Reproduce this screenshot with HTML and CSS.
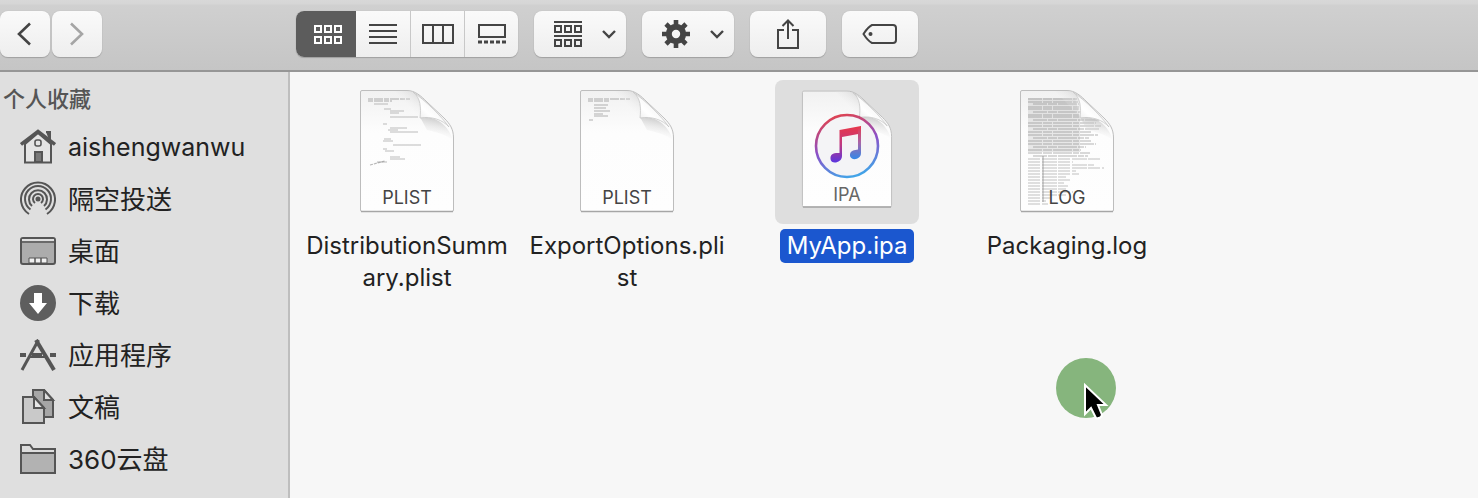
FILE: index.html
```html
<!DOCTYPE html>
<html lang="zh-CN">
<head>
<meta charset="utf-8">
<title>MyApp</title>
<link rel="stylesheet" href="styles.css">
</head>
<body>
<svg class="defs" aria-hidden="true">
  <defs>
    <linearGradient id="paper" x1="0" y1="0" x2="0" y2="1"><stop offset="0" stop-color="#f1f1f1"/><stop offset=".35" stop-color="#fdfdfd"/><stop offset="1" stop-color="#fefefe"/></linearGradient>
    <linearGradient id="foldShade" x1="0" y1="1" x2="1" y2="0"><stop offset=".3" stop-color="#fff" stop-opacity="0"/><stop offset="1" stop-color="#b4b4b4"/></linearGradient>
    <linearGradient id="curlShade" x1=".7" y1="0" x2=".4" y2="1"><stop offset="0" stop-color="#a8a8a8"/><stop offset="1" stop-color="#fff" stop-opacity="0"/></linearGradient>
    <linearGradient id="curl" x1="0" y1="1" x2="1" y2="0"><stop offset="0" stop-color="#ddd"/><stop offset=".4" stop-color="#fff"/><stop offset="1" stop-color="#e6e6e6"/></linearGradient>
    <linearGradient id="ring" x1=".3" y1="0" x2=".6" y2="1"><stop offset="0" stop-color="#e0434f"/><stop offset=".5" stop-color="#8b50c8"/><stop offset="1" stop-color="#41a5e8"/></linearGradient>
    <linearGradient id="noteL" x1="0" y1="0" x2="0" y2="1"><stop offset="0" stop-color="#e8374a"/><stop offset=".5" stop-color="#c03a80"/><stop offset="1" stop-color="#5a35e0"/></linearGradient>
    <linearGradient id="noteR" x1="0" y1="0" x2="0" y2="1"><stop offset="0" stop-color="#e8374a"/><stop offset=".5" stop-color="#a866a8"/><stop offset="1" stop-color="#3388e8"/></linearGradient>
    <symbol id="page" viewBox="0 0 144 144">
      <path d="M27 10.500H72C80 10.500 86 16 92 22L109 38C115 44 118.500 49 118.500 58V130a1.500 1.500 0 0 1-1.500 1.500H27a1.500 1.500 0 0 1-1.500-1.500V12a1.500 1.500 0 0 1 1.500-1.500z" fill="url(#paper)" stroke="#bdbdbd"/>
    </symbol>
    <symbol id="fold" viewBox="0 0 144 144">
      <path d="M60 11H72C80 11 87 18 92 22L85 37z" fill="url(#foldShade)" opacity=".7"/>
      <path d="M85 37C99 36 112 42 118 60C110 54 100 52 92 50z" fill="url(#curlShade)" opacity=".7"/>
      <path d="M78 12C86 18 86 28 85 38C97 36 108 40 114 47C108 38 90 20 78 12z" fill="url(#curl)" stroke="#c6c6c6" stroke-width=".8"/>
      <path d="M26 131.500H118" stroke="#a6a6a6" stroke-width="1.500"/>
    </symbol>
    <symbol id="chevron" viewBox="0 0 16 10"><path d="M2 2l6 6 6-6" fill="none" stroke="#444" stroke-width="2.400"/></symbol>
  </defs>
</svg>
<div class="window">
  <header class="toolbar">
    <nav class="history" aria-label="前进后退">
      <button class="btn back" aria-label="后退"><svg width="18" height="28" viewBox="0 0 18 28"><path d="M14 3.500L3 14l11 10.500" fill="none" stroke="#444" stroke-width="2.600"/></svg></button>
      <button class="btn forward" aria-label="前进"><svg width="18" height="28" viewBox="0 0 18 28"><path d="M3 3.500l11 10.500L3 24.500" fill="none" stroke="#a5a5a5" stroke-width="2.600"/></svg></button>
    </nav>
    <div class="tools">
      <div class="segments" role="group" aria-label="显示方式">
        <button class="seg active" aria-label="图标" aria-pressed="true"><svg width="30" height="24" viewBox="0 0 30 24" fill="none" stroke="#fff" stroke-width="2"><path d="M2 4h6v6H2zM12 4h6v6h-6zM22 4h6v6h-6zM2 15h6v6H2zM12 15h6v6h-6zM22 15h6v6h-6z"/></svg></button>
        <button class="seg" aria-label="列表"><svg width="30" height="24" viewBox="0 0 30 24" stroke="#444" stroke-width="2"><path d="M1 3h28M1 9h28M1 15h28M1 21h28"/></svg></button>
        <button class="seg" aria-label="分栏"><svg width="32" height="24" viewBox="0 0 32 24" fill="none" stroke="#444" stroke-width="2"><path d="M1 3h30v18H1zM11 3v18M21 3v18"/></svg></button>
        <button class="seg" aria-label="画廊"><svg width="30" height="24" viewBox="0 0 30 24" fill="none" stroke="#444" stroke-width="2"><path d="M2 3h26v12H2z"/><path d="M1 20h28" stroke-width="3" stroke-dasharray="4 2"/></svg></button>
      </div>
      <button class="btn menu" aria-label="分组" aria-haspopup="menu"><svg width="30" height="28" viewBox="0 0 30 28" fill="none" stroke="#444" stroke-width="2"><path d="M1 2h28M1 16h28M2 6h6v6H2zM12 6h6v6h-6zM22 6h6v6h-6zM2 20h6v6H2zM12 20h6v6h-6zM22 20h6v6h-6z"/></svg><svg width="16" height="10"><use href="#chevron"/></svg></button>
      <button class="btn menu" aria-label="操作" aria-haspopup="menu"><svg width="30" height="30" viewBox="-15 -15 30 30" fill="none" stroke="#444"><circle r="7.200" stroke-width="6"/><path d="M0-9V-14M0 9V14M-9 0H-14M9 0H14M-6.500-6.500L-10-10M6.500-6.500L10-10M-6.500 6.500L-10 10M6.500 6.500L10 10" stroke-width="4.600"/></svg><svg width="16" height="10"><use href="#chevron"/></svg></button>
      <button class="btn wide" aria-label="共享"><svg width="24" height="32" viewBox="0 0 24 32" fill="none" stroke="#444" stroke-width="2"><path d="M8 12H2v18h20V12h-6M12 21V3M6.500 8L12 2.500 17.500 8"/></svg></button>
      <button class="btn wide" aria-label="标签"><svg width="36" height="22" viewBox="0 0 36 22"><path d="M10 2H31a3 3 0 0 1 3 3V17a3 3 0 0 1-3 3H10Q6 18 1.500 11Q6 4 10 2z" fill="none" stroke="#444" stroke-width="2"/><circle cx="8.500" cy="11" r="2" fill="#444"/></svg></button>
    </div>
  </header>
  <div class="body">
    <aside class="sidebar">
      <h2>个人收藏</h2>
      <ul>
        <li><a href="#"><svg width="36" height="36" viewBox="0 0 36 36" fill="none" stroke="#555" stroke-width="2"><path d="M26 3h4v10" fill="#555"/><path d="M5 15V33.500H31V15L18 4z" fill="#e4e4e4"/><path d="M1 15.500L18 2.500 35 15.500" stroke-width="3.400"/><rect x="15" y="11" width="6" height="6" rx="2" stroke-width="1.600"/><path d="M15 23h7v10h-7z" fill="#777"/></svg><span class="latin">aishengwanwu</span></a></li>
        <li><a href="#"><svg width="36" height="36" viewBox="0 0 36 36" fill="none" stroke="#555" stroke-width="2"><path d="M9 33A17 17 0 1 1 27 33"/><path d="M10.500 28.500A13 13 0 1 1 25.500 28.500"/><path d="M12 25A9 9 0 1 1 24 25"/><path d="M15 22A5 5 0 1 1 21 22"/><circle cx="18" cy="18" r="1.500" fill="#555"/></svg><span>隔空投送</span></a></li>
        <li><a href="#"><svg width="36" height="36" viewBox="0 0 36 36"><rect x="1" y="5" width="34" height="26" rx="2" fill="#acacac" stroke="#555" stroke-width="2"/><path d="M2 6h32v2H2z" fill="#e0e0e0"/><path d="M2 9h32" stroke="#555" stroke-width="1.500"/><path d="M9 25h18v5H9z" fill="#f0f0f0" stroke="#555" stroke-width="1"/><path d="M15 25v5M21 25v5" stroke="#555" stroke-width="1.500"/></svg><span>桌面</span></a></li>
        <li><a href="#"><svg width="36" height="36" viewBox="0 0 36 36"><circle cx="18" cy="18" r="18" fill="#5e5e5e"/><path d="M14 8h8v10h5L18 29 9 18h5z" fill="#fff"/></svg><span>下载</span></a></li>
        <li><a href="#"><svg width="36" height="36" viewBox="0 0 36 36" fill="none" stroke="#555"><path d="M2 33L18.500 3" stroke-width="3"/><path d="M16 3L34 33" stroke-width="4"/><path d="M0 18h6M12 18h10M30 18h6" stroke-width="4"/><path d="M9 20h19" stroke-width="2"/></svg><span>应用程序</span></a></li>
        <li><a href="#"><svg width="36" height="36" viewBox="0 0 36 36" stroke="#555" stroke-width="2"><path d="M13 1H24L33 11V28H13z" fill="#a6a6a6"/><path d="M24 1v10h9z" fill="#ddd"/><path d="M3 8H14L24 19V34H3z" fill="#c9c9c9"/><path d="M14 8v11h10z" fill="#e6e6e6"/></svg><span>文稿</span></a></li>
        <li><a href="#"><svg width="36" height="36" viewBox="0 0 36 36" stroke="#555" stroke-width="2"><path d="M1 32V4H10L13 8H35V32z" fill="#ddd"/><path d="M1 12H35V32H1z" fill="#b2b2b2"/></svg><span>360云盘</span></a></li>
      </ul>
    </aside>
    <main class="files">
      <figure class="file">
        <div class="thumb"><svg width="144" height="144" viewBox="0 0 144 144"><use href="#page"/>
          <g fill="none" stroke="#999" stroke-width="1.200"><path d="M33 19h42M33 21h24" stroke-dasharray="5 1 9 1" stroke="#aaa"/><path d="M39 24h14M49 29h7M55 31h14M55 33h9M55 37h28M48 44h4M55 48h17M53 50h10M55 52h28M49 59h7M48 61h10M58 65h28M48 69h4M50 71h9M55 77h10M55 79h15M42 82h10" opacity=".65"/><path d="M35 85L50 81" stroke-dasharray="3 1" opacity=".7"/></g>
          <use href="#fold"/>
          <text class="kind" x="72" y="124">PLIST</text></svg></div>
        <figcaption><span>DistributionSumm<wbr>ary.plist</span></figcaption>
      </figure>
      <figure class="file">
        <div class="thumb"><svg width="144" height="144" viewBox="0 0 144 144"><use href="#page"/>
          <g fill="none" stroke="#999" stroke-width="1.200"><path d="M33 19h42M33 21h22" stroke-dasharray="5 1 9 1" stroke="#aaa"/><path d="M39 25h14M39 28h12M39 31h16M39 34h9M39 36h14M34 40h4" opacity=".75"/></g>
          <use href="#fold"/>
          <text class="kind" x="72" y="124">PLIST</text></svg></div>
        <figcaption><span>ExportOptions.pli<wbr>st</span></figcaption>
      </figure>
      <figure class="file selected">
        <div class="thumb"><svg width="144" height="144" viewBox="0 0 144 144">
          <svg x="3" y="1" width="138" height="138" viewBox="0 0 144 144"><use href="#page"/><use href="#fold"/></svg>
          <circle cx="72" cy="66" r="31" fill="#f4f4f6" stroke="url(#ring)" stroke-width="2.600"/>
          <path d="M64.500 50L86 46V53.500L67 57V76C67 83 56 85 55.500 79C55 73 60 73 64.500 73z" fill="url(#noteL)"/>
          <path d="M83 49L86 46V73C86 80 76 81 75 76C74.500 70 80 70 83 69.500z" fill="url(#noteR)"/>
          <text class="kind light" x="72" y="121">IPA</text></svg></div>
        <figcaption><span>MyApp.ipa</span></figcaption>
      </figure>
      <figure class="file">
        <div class="thumb"><svg width="144" height="144" viewBox="0 0 144 144"><use href="#page"/>
          <path d="M33 18H80L85 37V72H33z" fill="#999" opacity=".22"/>
          <g fill="none" stroke="#858585" stroke-width="1.200">
            <path d="M33 19h49M33 22h50M38 24h46M33 27h51M33 29h52M38 32h47M33 35h52M33 37h64M38 40h67M33 43h68M33 46h73M38 49h67M33 52h63M33 55h70M38 58h56M33 61h63M33 64h68M38 67h53M33 70h53M33 73h62M38 76h55" stroke-dasharray="14 1 9 1 19 1 6 1" opacity=".6"/>
            <path d="M33 79h72M33 82h45M33 85h66M33 88h76M33 91h48M33 94h51M33 97h38M33 100h44M33 103h36M33 106h40M33 109h38M33 112h45M33 115h38M33 118h22M33 121h18M33 124h20" stroke-dasharray="12 2 15 1" opacity=".5"/>
            <path d="M48 76V122" opacity=".6"/>
          </g>
          <use href="#fold"/>
          <text class="kind" x="72" y="124">LOG</text></svg></div>
        <figcaption><span>Packaging.log</span></figcaption>
      </figure>
    </main>
  </div>
  <svg class="pointer" width="60" height="66" viewBox="0 0 60 66" aria-hidden="true"><circle cx="30" cy="30" r="30" fill="#86b57d"/><path d="M29 27V56L35 50L40 60Q45 61 46 57L42 47H50z" fill="#000" stroke="#fff" stroke-width="2"/></svg>
</div>
</body>
</html>
```
FILE: styles.css
```css
* { box-sizing: border-box; }

body {
  margin: 0;
  background: #f7f7f7;
  color: #222;
  font-family: Inter, "Noto Sans CJK SC", sans-serif;
}

svg { display: block; flex: none; }
.defs { position: absolute; width: 0; height: 0; }

.window {
  position: relative;
  display: flex;
  flex-direction: column;
  min-height: 100vh;
  overflow: hidden;
}

.toolbar {
  display: flex;
  padding: 11px 0 13px;
  border-bottom: 2px solid #969696;
  background: linear-gradient(#d8d8d8 0, #d6d6d6 4px, #d0d0d0 5px, #c5c5c5 100%);
}

.history { display: flex; gap: 2px; width: 296px; }
.tools { display: flex; gap: 16px; }

button {
  display: flex;
  align-items: center;
  justify-content: center;
  margin: 0;
  padding: 0;
  border: 0;
  font: inherit;
}

.btn, .segments {
  height: 46px;
  border-radius: 8px;
  background: linear-gradient(#fafafa, #eee);
  box-shadow: 0 1px 1px #a0a0a0, 0 0 1px #aaa;
}

.history .btn { width: 50px; }
.menu { width: 92px; gap: 18px; padding-left: 10px; }
.wide { width: 76px; }

.segments { display: flex; overflow: hidden; }
.seg { width: 54px; background: transparent; border-left: 1px solid #c8c8c8; }
.seg.active { width: 60px; padding-left: 4px; border: 0; background: #5c5c5c; }
.seg.active + .seg { border: 0; }

.body { display: flex; flex: 1; }

.sidebar {
  flex: none;
  width: 290px;
  border-right: 2px solid #bebebe;
  background: #dfdfdf;
}

.sidebar h2 {
  margin: 0;
  padding: 11px 3px 6px;
  color: #555;
  font-size: 22px;
  font-weight: 500;
  line-height: 32px;
}

.sidebar ul { margin: 0; padding: 0; list-style: none; }

.sidebar a {
  display: flex;
  align-items: center;
  gap: 12px;
  height: 52px;
  padding-left: 20px;
  color: inherit;
  font-size: 26px;
  text-decoration: none;
}

.sidebar span { padding-bottom: 4px; }
.sidebar .latin { padding: 0; font-size: 25px; }

.files {
  display: flex;
  flex: 1;
  flex-wrap: wrap;
  align-items: flex-start;
  padding: 8px 0 0 7px;
}

.file {
  display: flex;
  flex-direction: column;
  align-items: center;
  gap: 5px;
  width: 220px;
  margin: 0;
  padding: 0 5px;
}

.thumb { border-radius: 8px; }

.file figcaption {
  font-size: 24px;
  line-height: 32px;
  text-align: center;
}

.file figcaption span {
  display: block;
  padding: 1px 7px;
  border-radius: 5px;
}

.file:not(.selected) figcaption span { padding: 1px 0; }

.selected .thumb { background: #dedede; }

.selected figcaption span {
  background: #1b57cf;
  color: #fff;
}

.kind { fill: #444; font-size: 18px; text-anchor: middle; }
.light { fill: #666; }

.pointer { position: absolute; left: 1056px; top: 358px; }
```
